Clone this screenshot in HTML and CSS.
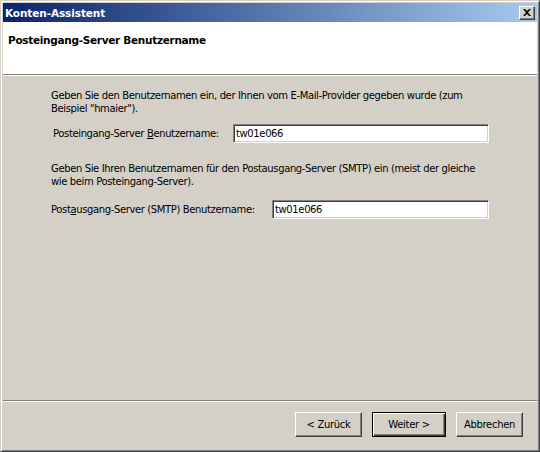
FILE: index.html
```html
<!DOCTYPE html>
<html lang="de">
<head>
<meta charset="utf-8">
<title>Konten-Assistent</title>
<link rel="stylesheet" href="styles.css">
</head>
<body>
<div class="window">
  <div class="titlebar">
    <span class="title">Konten-Assistent</span>
    <span class="close">
      <svg width="8" height="7" viewBox="0 0 8 7"><path d="M0 0h2l2 2 2-2h2L5 3.5 8 7H6L4 5 2 7H0l3-3.5z" fill="#000"/></svg>
    </span>
  </div>
  <div class="header">
    <div class="header-title">Posteingang-Server Benutzername</div>
  </div>
  <div class="content">
    <p class="text">Geben Sie den Benutzernamen ein, der Ihnen vom E-Mail-Provider gegeben wurde (zum<br>Beispiel "hmaier").</p>
    <div class="row row-first">
      <label class="label">Posteingang-Server <u>B</u>enutzername:</label>
      <div class="input input-wide">tw01e066</div>
    </div>
    <p class="text text-second">Geben Sie Ihren Benutzernamen für den Postausgang-Server (SMTP) ein (meist der gleiche<br>wie beim Posteingang-Server).</p>
    <div class="row row-second">
      <label class="label">Post<u>a</u>usgang-Server (SMTP) Benutzername:</label>
      <div class="input input-narrow">tw01e066</div>
    </div>
  </div>
  <div class="footer">
    <button class="btn">&lt; Zurück</button>
    <button class="btn btn-default">Weiter &gt;</button>
    <button class="btn">Abbrechen</button>
  </div>
</div>
</body>
</html>
```
FILE: styles.css
```css
* { box-sizing: border-box; }
html, body { margin: 0; padding: 0; }
body {
  width: 540px;
  height: 452px;
  font-family: "DejaVu Sans", "Liberation Sans", sans-serif;
  font-size: 10px;
  letter-spacing: -0.37px;
  color: #000;
  background: #d4d0c8;
}
.window {
  width: 540px;
  height: 452px;
  display: flex;
  flex-direction: column;
  background: #d4d0c8;
  border-top: 1px solid #d4d0c8;
  border-left: 1px solid #d4d0c8;
  border-right: 1px solid #404040;
  border-bottom: 1px solid #404040;
  box-shadow: inset 1px 1px 0 #ffffff, inset -1px -1px 0 #808080;
  padding: 2px;
}
.titlebar {
  height: 19px;
  flex: none;
  display: flex;
  align-items: center;
  justify-content: space-between;
  padding: 0 2px;
  background: linear-gradient(to right, #0a246a, #a6caf0);
}
.title {
  color: #fff;
  font-weight: bold;
  font-size: 10.5px;
  letter-spacing: -0.1px;
}
.close {
  width: 16px;
  height: 14px;
  display: flex;
  align-items: center;
  justify-content: center;
  background: #d4d0c8;
  border-top: 1px solid #fff;
  border-left: 1px solid #fff;
  border-right: 1px solid #404040;
  border-bottom: 1px solid #404040;
  box-shadow: inset -1px -1px 0 #808080;
}
.header {
  height: 54px;
  flex: none;
  background: #fff;
  border-bottom: 1px solid #fff;
  box-shadow: inset 0 -1px 0 #808080;
  padding: 12px 0 0 5px;
}
.header-title {
  font-weight: bold;
  font-size: 10.5px;
  letter-spacing: -0.3px;
}
.content {
  flex: 1;
  padding: 13px 0 0 48px;
  border-bottom: 1px solid #fff;
  box-shadow: inset 0 -1px 0 #808080;
}
.text {
  margin: 0;
  line-height: 13px;
}
.text-second { margin-top: 19px; }
.row {
  width: 438px;
  display: flex;
  align-items: center;
  justify-content: space-between;
}
.row-first { padding-left: 2px; margin-top: 9px; }
.row-second { margin-top: 12px; }
.label u { text-decoration: underline; }
.input {
  height: 19px;
  background: #fff;
  border-top: 1px solid #808080;
  border-left: 1px solid #808080;
  border-right: 1px solid #fff;
  border-bottom: 1px solid #fff;
  box-shadow: inset 1px 1px 0 #404040, inset -1px -1px 0 #d4d0c8;
  padding: 2px 2px;
  line-height: 14px;
}
.input-wide { width: 256px; }
.input-narrow { width: 217px; }
.footer {
  height: 47px;
  flex: none;
  display: flex;
  justify-content: flex-end;
  align-items: flex-start;
  gap: 10px;
  padding: 10px 14px 0 0;
}
.btn {
  width: 67px;
  height: 25px;
  font-family: inherit;
  font-size: 10px;
  letter-spacing: -0.3px;
  color: #000;
  background: #d4d0c8;
  border-top: 1px solid #fff;
  border-left: 1px solid #fff;
  border-right: 1px solid #404040;
  border-bottom: 1px solid #404040;
  box-shadow: inset -1px -1px 0 #808080;
  padding: 0;
}
.btn-default {
  width: 74px;
  border: 1px solid #000;
  box-shadow: inset 1px 1px 0 #fff, inset -1px -1px 0 #404040, inset -2px -2px 0 #808080;
}
```
